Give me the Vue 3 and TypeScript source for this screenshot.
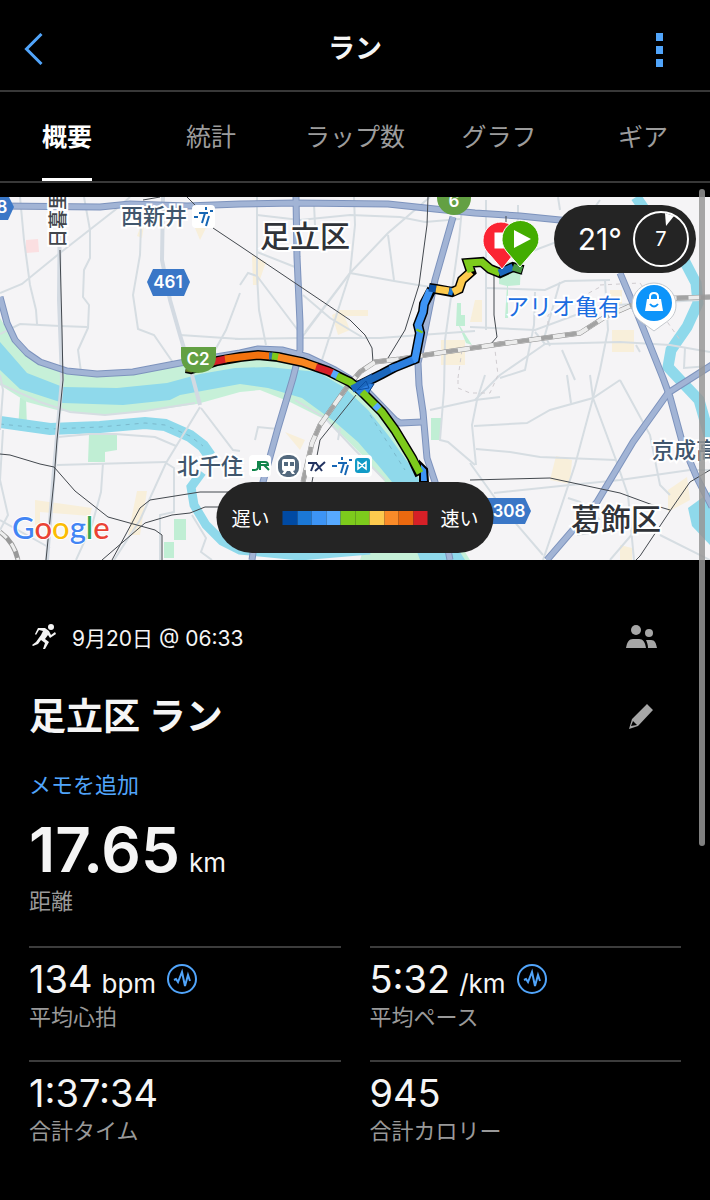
<script setup lang="ts">
import { ref } from 'vue'

interface Stat {
  value: string
  unit?: string
  label: string
  insight?: boolean
}

const tabs: string[] = ['概要', '統計', 'ラップ数', 'グラフ', 'ギア']
const active = ref<string>('概要')

const stats: Stat[] = [
  { value: '134', unit: 'bpm', label: '平均心拍', insight: true },
  { value: '5:32', unit: '/km', label: '平均ペース', insight: true },
  { value: '1:37:34', label: '合計タイム' },
  { value: '945', label: '合計カロリー' },
]

const paceColors: string[] = [
  '#004aa3', '#1b78d6', '#3d94f5', '#57a9ff', '#7dcb1c',
  '#7dcb1c', '#fdca4e', '#fa8b29', '#eb690f', '#d62027',
]

const minorRoads: string[] = [
  'M20 197L24 240L30 285L36 310L37 324',
  'M0 293L22 284L60 253L115 210L130 197',
  'M0 334L20 324L60 326L87 327',
  'M84 197L90 230L90 258L84 270L83 297L89 305L88 328L78 350L81 372',
  'M141 224L140 255L133 295L138 329L154 335L174 364',
  'M240 293L226 330L214 352M180 335L240 339',
  'M257 197L257 275L259 310L266 345M240 285L248 273L257 276L300 333',
  'M257 215L300 220L350 215L400 217L425 222L460 219',
  'M314 204L315 225M257 252L295 267',
  'M354 197L355 225L350 273L300 340M430 197L388 233L350 273L305 332',
  'M388 235L394 280M350 273L394 281L430 287',
  'M303 295L330 318L362 337M235 339L300 338L380 338L475 331',
  'M350 273L322 360',
  'M463 197L459 240L452 290L445 340L444 390',
  'M486 200L486 330M518 205L518 233L522 275',
  'M560 210L558 197M600 200L575 235L530 252',
  'M470 327L535 330L600 306L700 300M486 288L545 290L565 281L610 280',
  'M535 292L534 325L525 370L500 378M560 282L545 335L550 346',
  'M605 280L608 330L600 370L593 398M535 332L545 344L620 342L670 345L710 352',
  'M562 350L575 380M545 344L500 375L475 400',
  'M685 348L684 368L710 366M640 352L636 345',
  'M485 375L477 400L472 425L476 465',
  'M474 426L527 423L550 410L593 398L620 380',
  'M567 375L571 403M590 375L593 398L616 460L628 495L634 560',
  'M593 398L575 465L560 510L543 560',
  'M620 380L650 435L660 485L670 495',
  'M476 449L510 452L540 457L616 460',
  'M470 463L500 505L543 555M494 493L570 485L620 480L690 470L710 470',
  'M640 525L610 560M660 535L710 560',
  'M568 498L580 502L600 520M577 535L590 533',
  'M0 384L40 402L70 412L105 415L145 411L195 403',
  'M58 437L90 434L115 434L155 437L176 446M57 465L166 462',
  'M200 407L166 463L140 520L114 560M201 408L233 450L240 451',
  'M166 463L174 468L174 512L160 515L160 560M192 515L206 538L201 552L212 560',
  'M103 463L101 492L92 525L76 560M0 520L50 548',
  'M0 375L3 390L0 430M3 430L0 480L8 515L0 530M255 440L258 427L278 429',
  'M295 400L325 418L355 450L385 480M340 428L338 440',
  'M430 410L475 400L500 397M444 390L440 440L448 442L475 465',
]

const mainRoads: string[] = [
  'M0 206L100 207L130 204L187 206L240 204L295 203L388 204L435 209L475 213L520 216L560 220L620 225',
  'M0 297L7 323L15 340L27 353L40 362L67 371L97 374L133 372L180 363L240 353L258 349L282 350L308 357L335 370L350 379L368 392L395 420L400 423L422 422',
  'M296 197L297 257L300 323L300 350L293 378L278 428L263 482L252 560',
  'M453 217L435 280L425 330L418 363L419 385L423 412L427 458L435 482L450 560',
  'M620 273L637 313L663 378L670 397L683 445L697 478L712 507',
  'M712 365L668 393L633 442L597 502L547 560',
]
const wideLight: string[] = [
  'M60 197L59 300L62 380L54 470L47 560',
  'M163 197L162 260L170 300L180 335L192 375L200 405',
]
const parks: string[] = [
  'M20 398L26 398L27 428L33 432L18 430Z',
  'M89 435L117 435L117 450L105 452L105 462L88 462Z',
  'M174 519H186V540H174ZM164 542H174V558H164Z',
  'M431 418H441V440H431Z',
  'M499 262L521 262L520 285L508 286L508 318L505 318L507 286L499 284Z',
  'M457 303H461V315H465V326H460L472 345L466 343L459 326H456Z',
]
const commercial: string[] = [
  'M337 310H368V316H337ZM332 315L342 310L350 330L338 335Z',
  'M140 228L144 225L142 238L137 236ZM195 228H206L200 240Z',
  'M252 255L266 262L258 285L253 285Z',
  'M441 340H465V365H441ZM475 300H482V322H470Z',
  'M610 290H622V305H610ZM612 330H634V352H612Z',
  'M556 456L572 460L570 484L550 480Z',
  'M35 500L92 508L90 516L40 512V525H35Z',
  'M137 491L147 491L140 535L128 535Z',
  'M668 490L687 477L690 500L668 512Z',
  'M620 545L632 548V560H620ZM285 432L305 440L300 450Z',
]
const railways: string[] = [
  'M60 250L62 330L63 380L57 440L54 480L46 560',
  'M143 200L160 197M187 197L198 208M213 228L240 246L350 320L365 335L372 348L373 362',
  'M428 197L427 225L419 285L405 330L388 358',
  'M0 454L10 455L40 464L54 467L75 491L108 517L155 530L162 535L162 560',
  'M112 560L140 508L150 500L200 492L240 492',
  'M102 560L145 523L172 515L190 513L205 507L240 507',
  'M470 480L550 478L620 493L650 504L670 510',
  'M710 470L690 482L672 508L640 556L636 560',
  'M356 395L340 415L320 440L312 482',
  'M494 275L494 315L497 337L490 345M506 216V222',
]
const jrLine = 'M303 482L312 443L320 425L347 387L360 372L375 362L400 359L445 352L500 344L580 333L605 317L630 306L650 299L710 297'

const lowRoute = 'M186 368L191 369L205 365L217 361L240 357L258 355L278 357L302 362L328 371L350 382L360 390L368 398L382 412L395 430L412 458L420 475'
const highRoute = 'M356 387L382 374L395 367L415 359L420 333L418 325L423 312L424 304L432 289'
const tailRoute = 'M429 288L436 289L452 292L459 289L462 280L471 272L468 263L482 262L490 269L500 273L513 267L523 270'

const segments: { d: string; c: string }[] = [
  { d: 'M186 368L191 369L213 362', c: '#6b7f28' },
  { d: 'M210 363L217 361L226 359', c: '#d62027' },
  { d: 'M225 359L240 357L258 355L270 356', c: '#f4720f' },
  { d: 'M269 356L273 356', c: '#3474a5' },
  { d: 'M272 356L279 357', c: '#7dcb1c' },
  { d: 'M278 357L302 362L317 367', c: '#f98620' },
  { d: 'M316 367L328 371L333 373', c: '#d62027' },
  { d: 'M332 373L338 376', c: '#57a9ff' },
  { d: 'M337 376L350 382L355 386', c: '#7dcb1c' },
  { d: 'M362 392L368 398L382 412L395 430L412 458L420 473', c: '#7dcb1c' },
  { d: 'M375 405L379 409', c: '#57a9ff' },
  { d: 'M352 389L382 374L395 367', c: '#1b67bd' },
  { d: 'M390 369L398 366L415 359', c: '#2c7fe0' },
  { d: 'M413 360L415 359L420 333L418 325L423 312L424 304L430 290', c: '#3d94f5' },
  { d: 'M419 332L420 330', c: '#7dcb1c' },
  { d: 'M429 288L436 289', c: '#0b4ea2' },
  { d: 'M436 289L449 291', c: '#fdca4e' },
  { d: 'M449 291L453 292', c: '#1b78d6' },
  { d: 'M453 292L459 289L462 280L471 272', c: '#fdca4e' },
  { d: 'M471 272L468 263L482 262L490 269L500 273', c: '#7dcb1c' },
  { d: 'M499 273L513 267', c: '#1b67bd' },
  { d: 'M513 267L522 270', c: '#4b9a45' },
]
</script>

<template>
  <main class="screen">
    <header class="topbar">
      <button class="back" aria-label="戻る">
        <svg width="20" height="32" viewBox="0 0 20 32"><path d="M17.5 1L2.5 16L17.5 31" fill="none" stroke="#51a5fb" stroke-width="3" /></svg>
      </button>
      <h1>ラン</h1>
      <button class="more" aria-label="メニュー"><i></i><i></i><i></i></button>
    </header>

    <nav class="tabs" role="tablist">
      <button
        v-for="t in tabs"
        :key="t"
        role="tab"
        :aria-selected="t === active"
        :class="{ on: t === active }"
        @click="active = t"
      ><span>{{ t }}</span></button>
    </nav>

    <section class="map">
      <svg class="canvas" viewBox="0 197 710 363" preserveAspectRatio="xMidYMid slice">
        <rect y="197" width="710" height="363" fill="#f5f4f6" />
        <path d="M26 240L38 239L39 252L26 253Z" fill="#fbdfe1" />
        <path v-for="d in commercial" :key="d" :d="d" fill="#f8efda" />
        <path v-for="d in parks" :key="d" :d="d" fill="#c0eed4" />

        <path
          d="M0 318L15 342L40 364L67 373L97 376L133 374L190 364L258 352L282 353L308 360L345 382L365 398L395 435L422 482L470 560L360 560L385 482L362 455L328 421L290 402L260 390L240 392L197 404L140 412L100 415L57 410L27 402L0 385Z"
          fill="#c6f0d8"
        />
        <path
          d="M0 342L27 373L63 387L117 388L167 383L200 374L235 368L268 367L318 372L345 388L368 410L388 435L415 472L440 520L465 560L420 560L392 482L378 465L358 442L335 422L302 398L268 388L240 384L180 395L170 400L123 405L63 403L20 389L0 370Z"
          fill="#8fd9eb"
        />
        <g fill="none" stroke="#8fd9eb">
          <path d="M0 422L50 429L100 427L145 423L165 425L190 436L203 446L210 456" stroke-width="12" />
          <path d="M202 472L191 487L194 505L206 525L222 541L240 550L300 556L370 550" stroke-width="9" />
          <path d="M636 197L655 225L685 262L696 283L698 303L687 327L671 350L668 367L682 382L699 400L707 428L710 440" stroke-width="11" />
        </g>
        <path d="M710 492L688 508L692 526L710 545Z" fill="#8fd9eb" />
        <path d="M0 424L50 429L100 427L145 423L165 425L190 436L203 446M370 415L405 470" fill="none" stroke="#7bb9cc" stroke-dasharray="4 5" />

        <g fill="none" stroke="#d6dde2" stroke-width="2">
          <path v-for="d in minorRoads" :key="d" :d="d" />
        </g>
        <g fill="none" stroke="#d3dae2" stroke-width="4">
          <path v-for="d in wideLight" :key="d" :d="d" />
        </g>
        <g fill="none" stroke="#d0ccd0" stroke-width="1" stroke-dasharray="4 4">
          <path d="M458 378L462 350L475 346L510 340M458 380V388L470 393H490L498 375L495 350M600 285L640 283L680 340M548 325V315L600 287" />
        </g>
        <g fill="none" stroke-linejoin="round">
          <path v-for="d in mainRoads" :key="d" :d="d" stroke="#7d93bd" stroke-width="7" />
          <path v-for="d in mainRoads" :key="d" :d="d" stroke="#a2b4d5" stroke-width="5" />
        </g>
        <g fill="none" stroke="#43484e" stroke-width="1">
          <path v-for="d in railways" :key="d" :d="d" />
        </g>
        <g fill="none">
          <path :d="jrLine" stroke="#8b8b8b" stroke-width="5" />
          <path :d="jrLine" stroke="#ececec" stroke-width="4" />
          <path :d="jrLine" stroke="#a3a3a3" stroke-width="4" stroke-dasharray="12 12" />
          <path d="M0 532Q14 542 18 560" stroke="#999" stroke-width="5" />
          <path d="M0 532Q14 542 18 560" stroke="#eee" stroke-width="3" stroke-dasharray="9 7" />
        </g>

        <g fill="none" stroke="#000" stroke-width="10" stroke-linejoin="miter">
          <path :d="lowRoute" />
          <path :d="highRoute" />
          <path :d="tailRoute" />
        </g>
        <path d="M350 386L372 374L367 383L374 384L367 395L360 396Z" fill="#2c7fe0" stroke="#0d3f80" />
        <path d="M420 462L427 469L428 482H420Z" fill="#3d94f5" stroke="#000" stroke-width="2" />
        <g fill="none" stroke-width="7">
          <path v-for="s in segments" :key="s.d" :d="s.d" :stroke="s.c" />
        </g>
        <path d="M357 390L366 381L369 388Z" fill="none" stroke="#0b4ea2" />

        <path d="M181 347H216V356Q216 372 198 373Q181 372 181 356Z" fill="#63a043" />
        <text x="198" y="365" text-anchor="middle" class="shield">C2</text>
        <circle cx="454" cy="198" r="17" fill="#63a043" />
        <text x="454" y="207" text-anchor="middle" class="shield">6</text>
        <g fill="#3a77c7">
          <path d="M153 269H184L190 282L184 296H153L147 282Z" />
          <path d="M480 498H525L531 511L525 524H480Z" />
          <path d="M-10 197H9L14 207L8 220H-10Z" />
        </g>
        <text x="168" y="288" text-anchor="middle" class="shield">461</text>
        <text x="509" y="517" text-anchor="middle" class="shield">308</text>
        <text x="2" y="213" text-anchor="middle" class="shield">8</text>

        <text x="305" y="247" text-anchor="middle" class="ward">足立区</text>
        <text x="616" y="530" text-anchor="middle" class="ward">葛飾区</text>
        <text x="121" y="224" class="station">西新井</text>
        <text x="177" y="474" class="station">北千住</text>
        <text x="652" y="458" class="station">京成高</text>
        <text transform="translate(65 248) rotate(-90)" class="line-name">日暮里</text>
        <text x="506" y="315" class="shop">アリオ亀有</text>

        <rect x="192" y="205" width="23" height="23" rx="4" fill="#fff" />
        <g fill="none" stroke="#1666b4" stroke-width="2">
          <path d="M194 217H198M199 213H208M205 213L202 223M209 216L206 226M206 207V210M210 211H213" />
          <path d="M332 466H337M338 463H347M344 463L341 473M348 465L345 475M342 457V460M349 460H352" />
        </g>
        <rect x="249" y="455" width="22" height="22" rx="4" fill="#fff" />
        <path d="M258 461V467Q258 470 254 470H252M260 470V462H265Q268 462 268 465H260M264 465L269 470" fill="none" stroke="#11854b" stroke-width="2" />
        <rect x="276" y="453" width="25" height="26" rx="11" fill="#fff" />
        <rect x="278" y="455" width="21" height="22" rx="9" fill="#53697e" />
        <path d="M284 459H293Q295 459 295 461V469Q295 471 293 471L295 474H292L290 471H287L285 474H282L284 471Q282 471 282 469V461Q282 459 284 459Z" fill="#fff" />
        <path d="M284 462H288V466H284ZM290 462H294V466H290Z" fill="#53697e" />
        <rect x="306" y="455" width="66" height="22" rx="4" fill="#fff" />
        <path d="M308 463H317M314 463L311 471M316 463L322 471M325 462L315 471" fill="none" stroke="#233461" stroke-width="2" />
        <path d="M332 466H337M338 463H347M344 463L341 473M348 465L345 475M342 457V460M349 460H352" fill="none" stroke="#1666b4" stroke-width="2" />
        <rect x="355" y="458" width="15" height="15" rx="3" fill="#109ac6" />
        <path d="M358 462V469L362 466L366 469V462L362 465Z" fill="none" stroke="#fff" stroke-width="1.5" />

        <path d="M654 283a22 22 0 0 0-22 22c0 9 5 14 11 18l11 8l11-8c6-4 11-9 11-18a22 22 0 0 0-22-22Z" fill="#fff" stroke="#c5c9ce" />
        <circle cx="654" cy="303" r="18" fill="#0d94fa" />
        <path d="M647 299H661L663 311H645Z" fill="#fff" />
        <path d="M650 300V297Q650 293 654 293Q658 293 658 297V300" fill="none" stroke="#fff" stroke-width="2" />
        <path d="M650 304Q654 309 658 304" fill="none" stroke="#0d94fa" stroke-width="2" />

        <g stroke="#fff">
          <path d="M502 269L490 255C484 249 483 245 483 240A18 18 0 0 1 519 240C519 246 517 250 513 255Z" fill="#fb2433" />
          <rect x="495" y="233" width="14" height="15" fill="#fff" />
          <path d="M520 267L507 252C503 247 502 243 502 239A18.500 18.500 0 0 1 539 239C539 244 537 248 533 252Z" fill="#43ad00" />
        </g>
        <path d="M514 230L531 239L514 248Z" fill="#fff" />

        <text x="12" y="539" class="google">
          <tspan fill="#4285f4">G</tspan><tspan fill="#ea4335">o</tspan><tspan fill="#fbbc05">o</tspan><tspan fill="#4285f4">g</tspan><tspan fill="#34a853">l</tspan><tspan fill="#ea4335">e</tspan>
        </text>
      </svg>

      <div class="weather">
        <span>21°</span>
        <svg width="58" height="58" viewBox="0 0 58 58">
          <circle cx="29" cy="29" r="27" fill="none" stroke="#fff" stroke-width="2" />
          <path d="M33 3L42 6L34 16Z" fill="#fff" />
          <text x="29" y="36" text-anchor="middle" class="wind">7</text>
        </svg>
      </div>

      <div class="legend">
        <span>遅い</span>
        <div class="scale">
          <i v-for="(c, i) in paceColors" :key="i" :style="{ background: c }"></i>
        </div>
        <span>速い</span>
      </div>
    </section>

    <section class="details">
      <div class="row when">
        <svg width="28" height="26" viewBox="0 0 28 26">
          <circle cx="22" cy="3" r="3" fill="#f4f4f4" />
          <path d="M9 4L16 4L20 7L22 11L26 8L27 10L21 14L19 11L16 15L20 18L16 25L14 25L16 19L12 16L9 20L4 22L3 21L7 18L12 11L14 7L10 6L7 11L6 10Z" fill="#f4f4f4" />
        </svg>
        <time>9月20日 @ 06:33</time>
        <button class="end" aria-label="共有設定">
          <svg width="32" height="24" viewBox="0 0 32 24" fill="#a6a6a6">
            <circle cx="10" cy="5" r="5" />
            <path d="M0 23C1 17 3 14 7 14H13C17 14 19 17 20 23Z" />
            <circle cx="23" cy="8" r="4" />
            <path d="M20 15H25C29 15 30 18 31 23H22C22 20 21 17 20 15Z" />
          </svg>
        </button>
      </div>

      <div class="row name">
        <h2>足立区 ラン</h2>
        <button class="end" aria-label="名前を編集">
          <svg width="32" height="26" viewBox="0 0 32 26" fill="#a6a6a6">
            <path fill-rule="evenodd" d="M21 0L27 6L12 22L3 25L6 15ZM7 17L5 22L11 21Z" />
          </svg>
        </button>
      </div>

      <a class="memo" href="#">メモを追加</a>

      <div class="distance"><strong>17.65</strong><span class="unit">km</span></div>
      <div class="caption">距離</div>

      <div class="grid">
        <div v-for="s in stats" :key="s.label" class="stat">
          <div class="value">
            <div>{{ s.value }}<span v-if="s.unit" class="unit">{{ s.unit }}</span></div>
            <svg v-if="s.insight" width="32" height="32" viewBox="0 0 32 32" fill="none" stroke="#51a5fb" stroke-width="2">
              <circle cx="16" cy="16" r="14" />
              <path d="M8 17L10 16L12 19L16 9L19 23L22 12L24 18" />
            </svg>
          </div>
          <div class="caption">{{ s.label }}</div>
        </div>
      </div>
    </section>

    <div class="scrollbar"></div>
  </main>
</template>

<style>
body {
  background: #000;
}
</style>

<style scoped>
.screen {
  position: relative;
  min-height: 100vh;
  background: #000;
  color: #f5f5f5;
  font-family: Inter, "Noto Sans CJK JP", sans-serif;
  overflow: hidden;
}
button {
  border: 0;
  padding: 0;
  background: none;
  color: inherit;
  font: inherit;
  cursor: pointer;
}
svg {
  display: block;
}
h1,
h2 {
  margin: 0;
  font-weight: 700;
}
.topbar {
  display: flex;
  align-items: center;
  justify-content: space-between;
  height: 90px;
  padding: 8px 24px 0;
  box-sizing: border-box;
}
.topbar h1 {
  font-size: 27px;
  line-height: 40px;
}
.back,
.more {
  width: 48px;
}
.more {
  display: flex;
  flex-direction: column;
  align-items: flex-end;
  gap: 5px;
  padding: 2px 23px 0 0;
  box-sizing: border-box;
}
.more i {
  width: 7px;
  height: 8px;
  background: #51a5fb;
}
.tabs {
  display: flex;
  height: 93px;
  margin: 0 -5px;
  border-top: 2px solid #383838;
  border-bottom: 2px solid #383838;
  box-sizing: border-box;
}
.tabs button {
  flex: 1;
  display: flex;
  justify-content: center;
  font-size: 25px;
  color: #9c9c9c;
}
.tabs span {
  box-sizing: border-box;
  height: 89px;
  line-height: 90px;
  white-space: nowrap;
}
.tabs .on {
  color: #fff;
  font-weight: 700;
}
.tabs .on span {
  border-bottom: 3px solid #fff;
}
.map {
  position: relative;
  margin-top: 14px;
}
.canvas {
  width: 100%;
  height: auto;
}
.shield {
  font: 600 17px Inter, sans-serif;
  fill: #fff;
}
.ward {
  font: 500 30px "Noto Sans CJK JP", sans-serif;
  fill: #303338;
  stroke: #fff;
  stroke-width: 4px;
  paint-order: stroke;
}
.station,
.line-name {
  font: 500 22px "Noto Sans CJK JP", sans-serif;
  fill: #40566d;
  stroke: #fff;
  stroke-width: 4px;
  paint-order: stroke;
}
.line-name {
  font-size: 19px;
  fill: #41464c;
}
.shop {
  font: 400 23px "Noto Sans CJK JP", sans-serif;
  fill: #1b6de0;
  stroke: #fff;
  stroke-width: 4px;
  paint-order: stroke;
}
.google {
  font: 500 31px Lato, sans-serif;
  stroke: #fff;
  stroke-width: 2px;
  paint-order: stroke;
}
.weather {
  position: absolute;
  top: 8px;
  right: 14px;
  display: flex;
  align-items: center;
  gap: 10px;
  height: 68px;
  padding: 0 6px 0 24px;
  border-radius: 34px;
  background: #242424;
  color: #fff;
  font-size: 30px;
}
.wind {
  font: 400 20px Inter, sans-serif;
  fill: #fff;
}
.legend {
  position: absolute;
  bottom: 7px;
  left: 50%;
  transform: translateX(-50%);
  display: flex;
  align-items: center;
  justify-content: space-between;
  width: 277px;
  height: 71px;
  padding: 0 15px;
  box-sizing: border-box;
  border-radius: 36px;
  background: #242424;
  font-size: 19px;
  color: #fff;
}
.scale {
  display: flex;
  width: 145px;
  height: 14px;
}
.scale i {
  flex: 1;
}
.details {
  padding: 62px 29px 36px;
}
.row {
  display: flex;
  align-items: center;
}
.end {
  margin-left: auto;
  margin-right: 23px;
}
.when {
  height: 30px;
  font-size: 21px;
}
.when time {
  margin-left: 15px;
}
.name {
  height: 50px;
  margin-top: 40px;
}
.name h2 {
  font-size: 37px;
  line-height: 50px;
}
.memo {
  display: block;
  width: fit-content;
  margin-top: 28px;
  font-size: 22px;
  line-height: 30px;
  color: #51a5fb;
  text-decoration: none;
}
.distance {
  margin-top: 18px;
  line-height: 30px;
}
.distance strong {
  font-size: 62px;
  line-height: 64px;
  font-weight: 600;
}
.caption {
  font-size: 22px;
  line-height: 26px;
  color: #999;
}
.distance + .caption {
  margin-top: 6px;
}
.grid {
  display: grid;
  grid-template-columns: 1fr 1fr;
  column-gap: 29px;
  margin-top: 32px;
}
.stat {
  height: 114px;
  box-sizing: border-box;
  padding-top: 9px;
  border-top: 2px solid #3c3c3c;
}
.value {
  display: flex;
  align-items: center;
  gap: 10px;
  height: 44px;
  margin-bottom: 3px;
  font-size: 38px;
  line-height: 44px;
}
.unit {
  margin-left: 9px;
  font-size: 26px;
  line-height: 30px;
}
.scrollbar {
  position: absolute;
  top: 189px;
  right: 5px;
  width: 6px;
  height: 657px;
  border-radius: 3px;
  background: rgba(150, 150, 150, 0.85);
}
</style>
